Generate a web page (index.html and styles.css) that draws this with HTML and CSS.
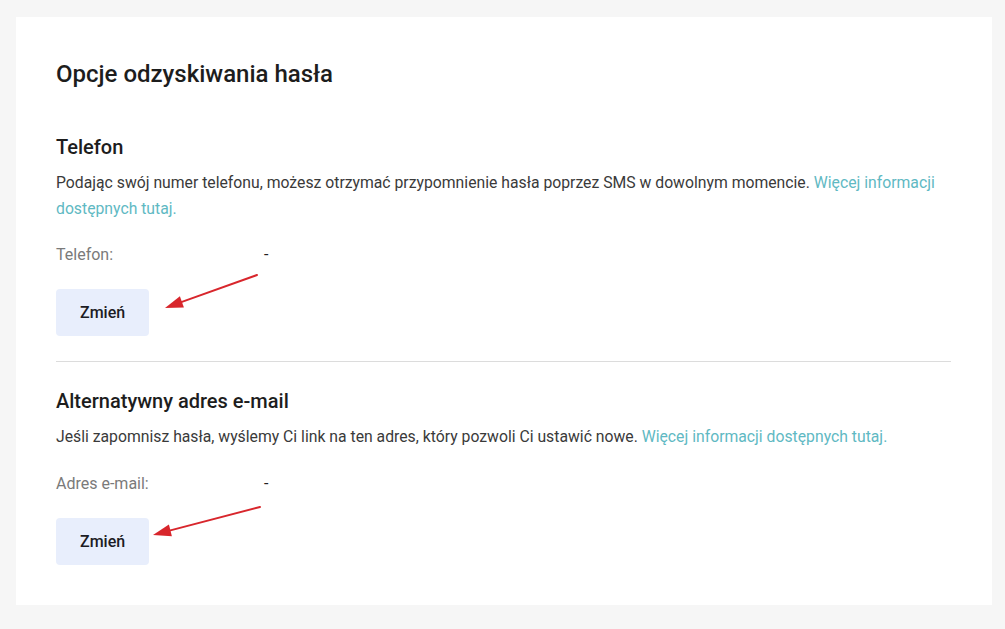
FILE: index.html
```html
<!DOCTYPE html>
<html lang="pl">
<head>
<meta charset="utf-8">
<title>Opcje odzyskiwania hasła</title>
<link rel="stylesheet" href="styles.css">
</head>
<body>
<main class="card">
  <h1 class="title">Opcje odzyskiwania hasła</h1>

  <section class="section">
    <h2 class="heading">Telefon</h2>
    <p class="desc">Podając swój numer telefonu, możesz otrzymać przypomnienie hasła poprzez SMS w dowolnym momencie. <a href="#" class="link">Więcej informacji dostępnych tutaj.</a></p>
    <div class="field">
      <span class="label">Telefon:</span>
      <span class="value">-</span>
    </div>
    <div class="action">
      <button class="btn" type="button">Zmień</button>
      <svg class="arrow" width="240" height="60" viewBox="0 0 240 60" aria-hidden="true">
        <line x1="201" y1="6" x2="125.9" y2="32.9" stroke="#d8262c" stroke-width="2" stroke-linecap="round"/>
        <polygon points="109,39 127.9,38.5 123.9,27.2" fill="#d8262c"/>
      </svg>
    </div>
  </section>

  <hr class="divider">

  <section class="section">
    <h2 class="heading">Alternatywny adres e-mail</h2>
    <p class="desc">Jeśli zapomnisz hasła, wyślemy Ci link na ten adres, który pozwoli Ci ustawić nowe. <a href="#" class="link">Więcej informacji dostępnych tutaj.</a></p>
    <div class="field field-second">
      <span class="label">Adres e-mail:</span>
      <span class="value">-</span>
    </div>
    <div class="action">
      <button class="btn" type="button">Zmień</button>
      <svg class="arrow" width="240" height="60" viewBox="0 0 240 60" aria-hidden="true">
        <line x1="204" y1="9" x2="114.4" y2="32.4" stroke="#d8262c" stroke-width="2" stroke-linecap="round"/>
        <polygon points="97,37 115.9,38.2 112.9,26.6" fill="#d8262c"/>
      </svg>
    </div>
  </section>
</main>
</body>
</html>
```

FILE: styles.css
```css
html, body {
  margin: 0;
  padding: 0;
}
body {
  background: #f6f6f6;
  font-family: Roboto, "Liberation Sans", Arial, sans-serif;
  color: #222;
  padding: 17px 13px 24px 16px;
}
.card {
  background: #fff;
  padding: 43px 41px 40px 40px;
}
.title {
  margin: 0;
  font-size: 24px;
  line-height: 28px;
  font-weight: 500;
  color: #1d1d1d;
}
.section {
  display: flex;
  flex-direction: column;
}
.title + .section {
  margin-top: 46px;
}
.heading {
  margin: 0;
  font-size: 20px;
  line-height: 26px;
  font-weight: 500;
  color: #1d1d1d;
}
.desc {
  margin: 10px 0 0;
  font-size: 15.75px;
  line-height: 26px;
  font-weight: 400;
  color: #3a3a3a;
}
.link {
  color: #5fb9c3;
  text-decoration: none;
}
.field {
  margin-top: 20px;
  display: grid;
  grid-template-columns: 208px 1fr;
  font-size: 16px;
  line-height: 26px;
}
.field-second {
  margin-top: 21px;
}
.label {
  color: #7a7a7a;
}
.value {
  color: #222;
}
.action {
  position: relative;
  margin-top: 21px;
  display: flex;
}
.btn {
  border: 0;
  border-radius: 4px;
  background: #e8eefc;
  color: #1c1c24;
  font-family: inherit;
  font-size: 16px;
  font-weight: 500;
  line-height: 23px;
  padding: 12px 24px;
  cursor: pointer;
}
.arrow {
  position: absolute;
  left: 0;
  top: -20px;
  pointer-events: none;
}
.divider {
  border: 0;
  border-top: 1px solid #dcdcdc;
  margin: 25px 0 26px;
}
```
